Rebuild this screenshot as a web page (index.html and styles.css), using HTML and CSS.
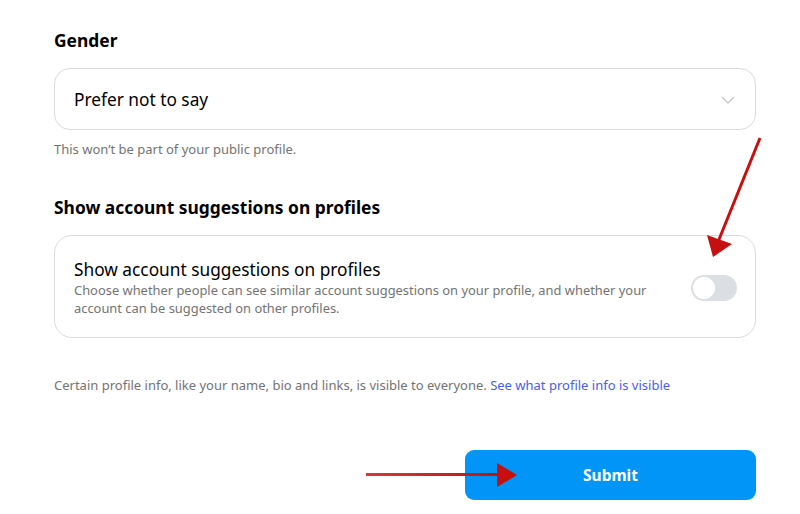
FILE: index.html
```html
<!DOCTYPE html>
<html>
<head>
<meta charset="utf-8">
<link rel="stylesheet" href="styles.css">
</head>
<body>
<div class="page">
  <h2 class="heading heading-gender">Gender</h2>
  <div class="select">
    <span class="select-value">Prefer not to say</span>
    <svg class="chevron" width="14" height="8" viewBox="0 0 14 8"><path d="M1 1l6 6 6-6" fill="none" stroke="#c7c7c7" stroke-width="1.3"/></svg>
  </div>
  <p class="helper">This won’t be part of your public profile.</p>

  <h2 class="heading heading-suggest">Show account suggestions on profiles</h2>
  <div class="card">
    <div class="card-text">
      <div class="card-title">Show account suggestions on profiles</div>
      <div class="card-desc">Choose whether people can see similar account suggestions on your profile, and whether your account can be suggested on other profiles.</div>
    </div>
    <div class="toggle"><span class="knob"></span></div>
  </div>

  <p class="footer-note">Certain profile info, like your name, bio and links, is visible to everyone. <a class="link" href="#">See what profile info is visible</a></p>

  <div class="actions">
    <button class="submit">Submit</button>
  </div>
</div>

<svg class="arrows" width="800" height="514" viewBox="0 0 800 514">
  <defs>
    <linearGradient id="g1" x1="366" y1="0" x2="516" y2="0" gradientUnits="userSpaceOnUse">
      <stop offset="0" stop-color="#d63a3a"/>
      <stop offset="1" stop-color="#b80f0f"/>
    </linearGradient>
  </defs>
  <line x1="760" y1="138" x2="718" y2="242" stroke="#c41010" stroke-width="3"/>
  <polygon points="713,257 707,235 732,244" fill="#c41010"/>
  <line x1="366" y1="474.5" x2="500" y2="474.5" stroke="url(#g1)" stroke-width="3"/>
  <polygon points="517,475 497,463 497,487" fill="#c41010"/>
</svg>
</body>
</html>
```
FILE: styles.css
```css
* { box-sizing: border-box; }
html, body { margin: 0; padding: 0; background: #fff; }
body {
  font-family: "Noto Sans", "Open Sans", "Liberation Sans", sans-serif;
  color: #000;
  width: 800px;
  height: 514px;
  overflow: hidden;
  position: relative;
}
.page {
  padding: 29px 44px 0 54px;
  display: flex;
  flex-direction: column;
}
.heading {
  margin: 0;
  font-size: 17.4px;
  font-weight: 700;
  line-height: 22px;
}
.heading-gender { margin-bottom: 17px; }
.select {
  height: 62px;
  border: 1px solid #dbdbdb;
  border-radius: 16px;
  display: flex;
  align-items: center;
  justify-content: space-between;
  padding: 0 20px 0 19px;
}
.select-value { font-size: 17.3px; }
.chevron { margin-top: 1px; }
.helper {
  margin: 10px 0 0;
  font-size: 13px;
  color: #737373;
  line-height: 18px;
}
.heading-suggest { margin-top: 38px; margin-bottom: 17px; }
.card {
  border: 1px solid #dbdbdb;
  border-radius: 18px;
  height: 103px;
  display: flex;
  align-items: center;
  justify-content: space-between;
  padding: 0 18px 0 19px;
}
.card-text { width: 600px; padding-top: 3px; }
.card-title { font-size: 17.3px; line-height: 22px; }
.card-desc {
  font-size: 12.9px;
  color: #737373;
  line-height: 18px;
}
.toggle {
  width: 46px;
  height: 26px;
  border-radius: 13px;
  background: #dbdfe4;
  padding: 2px;
  display: flex;
  margin-top: 2px;
}
.knob {
  width: 22px;
  height: 22px;
  border-radius: 50%;
  background: #fff;
}
.footer-note {
  margin: 38px 0 0;
  font-size: 13px;
  color: #737373;
  line-height: 18px;
}
.link { color: #4a5ee8; text-decoration: none; }
.actions {
  margin-top: 56px;
  display: flex;
  justify-content: flex-end;
}
.submit {
  width: 291px;
  height: 50px;
  border: none;
  border-radius: 9px;
  background: #0095f6;
  color: #fff;
  font-family: inherit;
  font-size: 15.5px;
  font-weight: 700;
}
.arrows {
  position: absolute;
  left: 0;
  top: 0;
  pointer-events: none;
}
```
